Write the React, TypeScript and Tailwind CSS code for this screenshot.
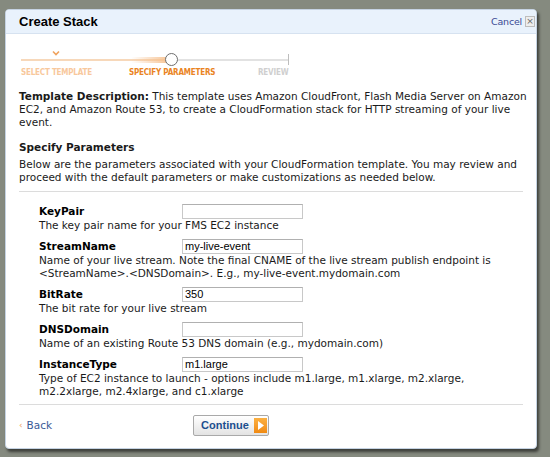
import React from 'react';

const params = [
  { name: 'KeyPair', value: '', desc: ['The key pair name for your FMS EC2 instance'] },
  {
    name: 'StreamName',
    value: 'my-live-event',
    desc: [
      'Name of your live stream. Note the final CNAME of the live stream publish endpoint is',
      '<StreamName>.<DNSDomain>. E.g., my-live-event.mydomain.com',
    ],
  },
  { name: 'BitRate', value: '350', desc: ['The bit rate for your live stream'] },
  { name: 'DNSDomain', value: '', desc: ['Name of an existing Route 53 DNS domain (e.g., mydomain.com)'] },
  {
    name: 'InstanceType',
    value: 'm1.large',
    desc: [
      'Type of EC2 instance to launch - options include m1.large, m1.xlarge, m2.xlarge,',
      'm2.2xlarge, m2.4xlarge, and c1.xlarge',
    ],
  },
];

const Progress = () => (
  <div className="relative h-[44px] ml-[2px] w-[290px]">
    {/* check mark over the first step */}
    <svg className="absolute left-[31px] top-[4px]" width="8" height="6" viewBox="0 0 8 6">
      <polyline points="1,1.5 4,4.5 7,1.5" fill="none" stroke="#f0a25c" strokeWidth="1.6" />
    </svg>
    {/* done part of the line */}
    <div className="absolute left-0 top-[13px] h-[2px] w-[150px] bg-[#f7d8ba]" />
    <div className="absolute left-[110px] top-[11px] h-[6px] w-[40px] bg-gradient-to-r from-transparent to-[#f6c08e] rounded-r-full" />
    {/* remaining part */}
    <div className="absolute left-[150px] top-[13px] h-[2px] w-[117px] bg-[#e2e2e2]" />
    <div className="absolute left-[267px] top-[8px] h-[11px] w-[1px] bg-[#bdbdbd]" />
    <div className="absolute left-[144px] top-[7px] w-[13px] h-[13px] rounded-full bg-white border-[1.5px] border-[#6e6e6e]" />
    <div className="absolute top-[21px] left-0 flex text-[8px] font-bold leading-[12px] font-['DejaVu_Sans_Condensed','Liberation_Sans',sans-serif] tracking-[-0.2px] whitespace-nowrap">
      <span className="w-[108px] text-[#f8c89c]">SELECT TEMPLATE</span>
      <span className="w-[129px] text-[#ea8424]">SPECIFY PARAMETERS</span>
      <span className="text-[#cfcfcf]">REVIEW</span>
    </div>
  </div>
);

export default function App() {
  return (
    <div className="w-[550px] h-[457px] bg-[#858a7f] pt-[9px] pl-[5px] font-['DejaVu_Sans',Verdana,sans-serif] text-[10.5px] leading-[13px] text-[#1a1a1a]">
      <div className="w-[532px] h-[440px] bg-white rounded-[4px] border border-[#c5d3e3] shadow-[2px_3px_3px_rgba(0,0,0,0.55)] flex flex-col overflow-hidden">
        <div className="h-[24px] shrink-0 bg-[#e9f2fc] border-b border-[#d6e2f0] flex items-center justify-between pl-[13px] pr-[1px]">
          <span className="text-[13px] font-bold text-black font-['Liberation_Sans',Arial,sans-serif]">Create Stack</span>
          <div className="flex items-center gap-[3px]">
            <span className="text-[9.5px] tracking-[-0.2px] text-[#3b4a94]">Cancel</span>
            <span className="w-[10px] h-[11px] border border-[#bdbdbd] bg-[#ededed] text-[#666] text-[9px] leading-[9px] flex items-center justify-center">×</span>
          </div>
        </div>

        <div className="pt-[12px] px-[13px] whitespace-nowrap">
          <Progress />

          <div>
            <div>
              <b>Template Description:</b> This template uses Amazon CloudFront, Flash Media Server on Amazon
            </div>
            <div>EC2, and Amazon Route 53, to create a CloudFormation stack for HTTP streaming of your live</div>
            <div>event.</div>
          </div>

          <p className="mt-[12px] font-bold">Specify Parameters</p>
          <div className="mt-[4px]">
            <div>Below are the parameters associated with your CloudFormation template. You may review and</div>
            <div>proceed with the default parameters or make customizations as needed below.</div>
          </div>

          <div className="mt-[7px] border-t border-[#dcdcdc] pt-[12px] pl-[20px] flex flex-col gap-[7px] pb-[6px]">
            {params.map((p) => (
              <div key={p.name}>
                <div className="flex items-center h-[15px]">
                  <span className="w-[143px] font-bold text-black">{p.name}</span>
                  <div className="w-[121px] h-[15px] border border-[#c8c8c8] border-t-[#b0b0b0] bg-white px-[2px] text-[11px] leading-[13px] font-['Liberation_Sans',Arial,sans-serif] text-black">
                    {p.value}
                  </div>
                </div>
                {p.desc.map((d) => (
                  <div key={d}>{d}</div>
                ))}
              </div>
            ))}
          </div>

          <div className="border-t border-[#dcdcdc] flex items-center h-[41px]">
            <span className="text-[#f0a060] text-[9px] mr-[4px]">‹</span>
            <span className="text-[#3a5a96]">Back</span>
            <button className="ml-[141px] h-[21px] w-[76px] rounded-[2px] border border-[#a9a9a9] bg-gradient-to-b from-white to-[#e3e3e3] flex items-center pl-[7px] pr-[1px]">
              <span className="font-bold text-[#1c4e8e] text-[11px] font-['Liberation_Sans',Arial,sans-serif]">Continue</span>
              <span className="ml-auto w-[13px] h-[15px] bg-gradient-to-b from-[#fbb040] to-[#f08a10] flex items-center justify-center">
                <svg width="6" height="9" viewBox="0 0 6 9">
                  <polygon points="0,0 6,4.5 0,9" fill="#fff" />
                </svg>
              </span>
            </button>
          </div>
        </div>
      </div>
    </div>
  );
}
